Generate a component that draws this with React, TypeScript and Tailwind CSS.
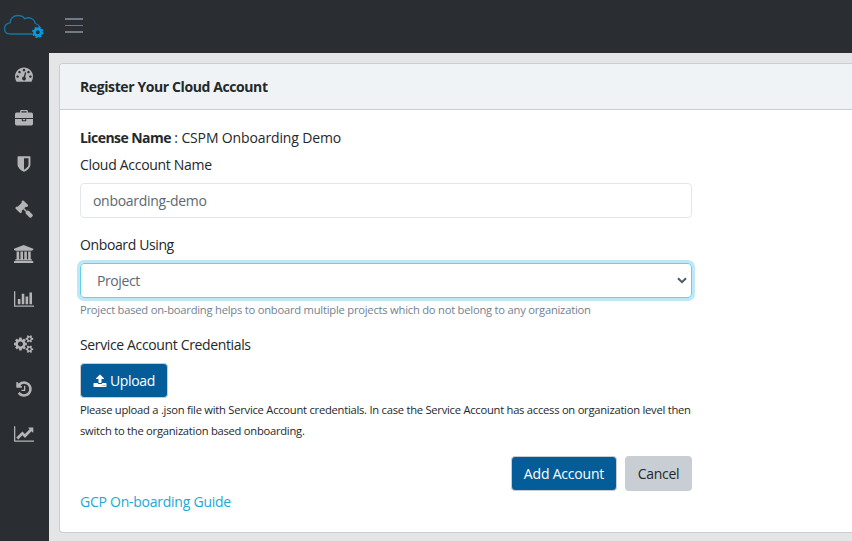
import React from "react";

type Glyph = { name: string; w: number; px: string; d: string };

const GEAR_RING =
  "q0 16-149 31-12 27-30 52 51 113 51 138 0 4-4 7-122 71-124 71-8 0-46-47t-52-68q-20 2-30 2t-30-2q-14 21-52 68t-46 47q-2 0-124-71-4-3-4-7 0-25 51-138-18-25-30-52-149-15-149-31v-140q0-16 149-31 13-29 30-52-51-113-51-138 0-4 4-7 4-2 35-20t59-34 30-16q8 0 46 46.5t52 67.5q20-2 30-2t30 2q51-71 92-112l6-2q4 0 124 70 4 3 4 7 0 25-51 138 17 23 30 52 149 15 149 31z";

const items: Glyph[] = [
  {
    name: "Dashboard",
    w: 1792,
    px: "w-[18px]",
    d: "M384 1152q0-53-37.5-90.5t-90.5-37.5-90.5 37.5-37.5 90.5 37.5 90.5 90.5 37.5 90.5-37.5 37.5-90.5zm192-448q0-53-37.5-90.5t-90.5-37.5-90.5 37.5-37.5 90.5 37.5 90.5 90.5 37.5 90.5-37.5 37.5-90.5zm428 481l101-382q6-26-7.5-48.5t-38.5-29.5-48 6.5-30 39.5l-101 382q-60 5-107 43.5t-63 98.5q-20 77 20 146t117 89 146-20 89-117q16-60-6-117t-72-91zm660-33q0-53-37.5-90.5t-90.5-37.5-90.5 37.5-37.5 90.5 37.5 90.5 90.5 37.5 90.5-37.5 37.5-90.5zm-640-640q0-53-37.5-90.5t-90.5-37.5-90.5 37.5-37.5 90.5 37.5 90.5 90.5 37.5 90.5-37.5 37.5-90.5zm448 192q0-53-37.5-90.5t-90.5-37.5-90.5 37.5-37.5 90.5 37.5 90.5 90.5 37.5 90.5-37.5 37.5-90.5zm320 448q0 261-141 483-19 29-54 29h-1402q-35 0-54-29-141-221-141-483 0-182 71-348t191-286 286-191 348-71 348 71 286 191 191 286 71 348z",
  },
  {
    name: "Inventory",
    w: 1792,
    px: "w-[18px]",
    d: "M640 256h512v-128h-512v128zm1152 640v480q0 66-47 113t-113 47h-1472q-66 0-113-47t-47-113v-480h672v160q0 26 19 45t45 19h320q26 0 45-19t19-45v-160h672zm-768 0v128h-256v-128h256zm768-480v384h-1792v-384q0-66 47-113t113-47h352v-160q0-40 28-68t68-28h576q40 0 68 28t28 68v160h352q66 0 113 47t47 113z",
  },
  {
    name: "Security",
    w: 1792,
    px: "w-[18px]",
    d: "M1344 960v-640h-448v1137q119-63 213-137 235-184 235-360zm192-768v768q0 86-33.5 170.5t-83 150-118 127.5-126.5 103-121 77.5-89.5 49.5-42.5 20q-12 6-26 6t-26-6q-16-7-42.5-20t-89.5-49.5-121-77.5-126.5-103-118-127.5-83-150-33.5-170.5v-768q0-26 19-45t45-19h1152q26 0 45 19t19 45z",
  },
  {
    name: "Policies",
    w: 1792,
    px: "w-[18px]",
    d: "M1771 1536q0 53-37 90l-107 108q-39 37-91 37-53 0-90-37l-363-364q-38-36-38-90 0-53 43-96l-256-256-126 126q-14 14-34 14t-34-14q2 2 12.5 12t12.5 13 10 11.5 10 13.5 6 13.5 5.5 16.5 1.5 18q0 38-28 68-3 3-16.5 18t-19 20.5-18.5 16.5-22 15.5-22 9-26 4.5q-40 0-68-28l-408-408q-28-28-28-68 0-13 4.5-26t9-22 15.5-22 16.5-18.5 20.5-19 18-16.5q30-28 68-28 10 0 18 1.5t16.5 5.5 13.5 6 13.5 10 11.5 10 13 12.5 12 12.5q-14-14-14-34t14-34l348-348q14-14 34-14t34 14q-2-2-12.5-12t-12.5-13-10-11.5-10-13.5-6-13.5-5.5-16.5-1.5-18q0-38 28-68 3-3 16.5-18t19-20.5 18.5-16.5 22-15.5 22-9 26-4.5q40 0 68 28l408 408q28 28 28 68 0 13-4.5 26t-9 22-15.5 22-16.5 18.5-20.5 19-18 16.5q-30 28-68 28-10 0-18-1.5t-16.5-5.5-13.5-6-13.5-10-11.5-10-13-12.5-12-12.5q14 14 14 34t-14 34l-126 126 256 256q43-43 96-43 52 0 91 37l363 363q37 39 37 91z",
  },
  {
    name: "Compliance",
    w: 1920,
    px: "w-[19.3px]",
    d: "M960 0l960 384v128h-128q0 26-20.5 45t-48.5 19h-1526q-28 0-48.5-19t-20.5-45h-128v-128zm-704 640h256v768h128v-768h256v768h128v-768h256v768h128v-768h256v768h59q28 0 48.5 19t20.5 45v64h-1664v-64q0-26 20.5-45t48.5-19h59v-768zm1595 960q28 0 48.5 19t20.5 45v128h-1920v-128q0-26 20.5-45t48.5-19h1782z",
  },
  {
    name: "Reports",
    w: 2048,
    px: "w-[20.6px]",
    d: "M640 896v512h-256v-512h256zm384-512v1024h-256v-1024h256zm1024 1152v128h-2048v-1536h128v1408h1920zm-640-896v768h-256v-768h256zm384-384v1152h-256v-1152h256z",
  },
  {
    name: "Configure",
    w: 1920,
    px: "w-[19.3px]",
    d:
      "M896 896q0-106-75-181t-181-75-181 75-75 181 75 181 181 75 181-75 75-181zm768 512q0-52-38-90t-90-38-90 38-38 90q0 53 37.5 90.5t90.5 37.5 90.5-37.5 37.5-90.5zm0-1024q0-52-38-90t-90-38-90 38-38 90q0 53 37.5 90.5t90.5 37.5 90.5-37.5 37.5-90.5zm-384 421v185q0 10-7 19.5t-16 10.5l-155 24q-11 35-32 76 34 48 90 115 7 11 7 20 0 12-7 19-23 30-82.5 89.5t-78.5 59.5q-11 0-21-7l-115-90q-37 19-77 31-11 108-23 155-7 24-30 24h-186q-11 0-20-7.5t-10-17.5l-23-153q-34-10-75-31l-118 89q-7 7-20 7-11 0-21-8-144-133-144-160 0-9 7-19 10-14 41-53t47-61q-23-44-35-82l-152-24q-10-1-17-9.5t-7-19.5v-185q0-10 7-19.5t16-10.5l155-24q11-35 32-76-34-48-90-115-7-11-7-20 0-12 7-20 22-30 82-89t79-59q11 0 21 7l115 90q34-18 77-32 11-108 23-154 7-24 30-24h186q11 0 20 7.5t10 17.5l23 153q34 10 75 31l118-89q8-7 20-7 11 0 21 8 144 133 144 160 0 8-7 19-12 16-42 54t-45 60q23 48 34 82l152 23q10 2 17 10.5t7 19.5z" +
      "M1920 1338v140" + GEAR_RING +
      "M1920 314v140" + GEAR_RING,
  },
  {
    name: "History",
    w: 1792,
    px: "w-[18px]",
    d: "M1664 896q0 156-61 298t-164 245-245 164-298 61q-172 0-327-72.5t-264-204.5q-7-10-6.5-22.5t8.5-20.5l137-138q10-9 25-9 16 2 23 12 73 95 179 147t225 52q104 0 198.5-40.5t163.5-109.5 109.5-163.5 40.5-198.5-40.5-198.5-109.5-163.5-163.5-109.5-198.5-40.5q-98 0-188 35.5t-160 101.5l137 138q31 30 14 69-17 40-59 40h-448q-26 0-45-19t-19-45v-448q0-42 40-59 39-17 69 14l130 129q107-101 244.5-156.5t284.5-55.5q156 0 298 61t245 164 164 245 61 298zm-640-288v448q0 14-9 23t-23 9h-320q-14 0-23-9t-9-23v-64q0-14 9-23t23-9h224v-352q0-14 9-23t23-9h64q14 0 23 9t9 23z",
  },
  {
    name: "Trends",
    w: 2048,
    px: "w-[20.6px]",
    d: "M2048 1536v128h-2048v-1536h128v1408h1920zm-128-1248v435q0 21-19.5 29.5t-35.5-7.5l-121-121-633 633q-10 10-23 10t-23-10l-233-233-416 416-192-192 585-585q10-10 23-10t23 10l233 233 464-464-121-121q-16-16-7.5-35.5t29.5-19.5h435q14 0 23 9t9 23z",
  },
];

function CloudLogo() {
  return (
    <svg viewBox="0 0 44 30" className="h-[30px] w-[44px]" fill="none">
      <path
        d="M32 24H10.500C6.800 24 4.500 22 4.500 18.800C4.500 15.500 7 13.200 10.200 12.800C10.200 8.500 13.500 5.500 18 5.500C21 5.500 23.500 6.700 24.800 8.800C29 6.200 34.800 9 35.200 13.500C38.300 14.500 40 16.500 40.200 19"
        stroke="#15779f"
        strokeWidth="1.300"
      />
      <circle cx="37.800" cy="22.300" r="3.300" stroke="#0a9be3" strokeWidth="2.600" />
      <circle cx="37.800" cy="22.300" r="5" stroke="#0a9be3" strokeWidth="1.600" strokeDasharray="2.200 1.727" />
    </svg>
  );
}

export default function App() {
  return (
    <div className="flex h-[541px] w-[852px] overflow-hidden bg-[#2a2d32] font-['Open_Sans','Noto_Sans',sans-serif] text-[14px] text-[#23282c]">
      <aside className="flex w-[49px] shrink-0 flex-col">
        <div className="flex h-[51px] items-start pt-[10px]">
          <CloudLogo />
        </div>
        <nav className="flex w-[48px] flex-col">
          {items.map((it) => (
            <a key={it.name} aria-label={it.name} className="flex h-[45px] items-center justify-center">
              <svg viewBox={`0 0 ${it.w} 1792`} className={`h-[18px] ${it.px} fill-[#b3b4b6]`}>
                <path d={it.d} />
              </svg>
            </a>
          ))}
        </nav>
      </aside>

      <div className="flex min-w-0 flex-1 flex-col">
        <header className="flex h-[53px] shrink-0 items-start pt-[18px] pl-[16px]">
          <div className="flex w-[18px] flex-col gap-[5px]">
            <span className="h-[1.5px] bg-[#6f7b86]" />
            <span className="h-[1.5px] bg-[#6f7b86]" />
            <span className="h-[1.5px] bg-[#6f7b86]" />
          </div>
        </header>

        <main className="flex-1 bg-[#e4e5e6] pt-[10px] pl-[10px]">
          <section className="h-[470px] rounded-l border border-r-0 border-[#c8ced3] bg-white">
            <h1 className="flex h-[46px] items-center rounded-tl border-b border-[#c8ced3] bg-[#f0f3f5] pl-[20px] font-bold tracking-[-0.4px]">
              Register Your Cloud Account
            </h1>
            <div className="flex w-[632px] flex-col pt-[17px] pl-[20px]">
              <p className="leading-[21px] tracking-[-0.14px]">
                <b className="tracking-[-0.56px]">License Name</b> : CSPM Onboarding Demo
              </p>
              <label className="mt-[6px] leading-[21px] tracking-[-0.3px]">Cloud Account Name</label>
              <div className="mt-[8px] flex h-[35px] items-center rounded border border-[#e4e7ea] px-[12px] tracking-[-0.3px] text-[#5c6873]">
                onboarding-demo
              </div>
              <label className="mt-[16px] leading-[21px] tracking-[-0.38px]">Onboard Using</label>
              <div className="mt-[8px] flex h-[35px] items-center justify-between rounded border border-[#63d0ee] pr-[4px] pl-[16px] tracking-[-0.4px] text-[#5c6873] ring-3 ring-[#bce9f5]">
                Project
                <svg viewBox="0 0 10 7" className="h-[7px] w-[10px]" fill="none" stroke="#4c5a66" strokeWidth="2">
                  <path d="M1 1.200L5 5.200L9 1.200" />
                </svg>
              </div>
              <small className="mt-[3px] text-[11.200px] leading-[17px] tracking-[-0.225px] text-[#73818f]">
                Project based on-boarding helps to onboard multiple projects which do not belong to any organization
              </small>
              <label className="mt-[16px] leading-[21px] tracking-[-0.36px]">Service Account Credentials</label>
              <button className="mt-[8px] flex h-[35px] w-[88px] items-center justify-center gap-[3px] rounded border border-[#c8ced3] bg-[#045d98] tracking-[-0.35px] text-white">
                <svg viewBox="0 0 1792 1792" className="h-[14px] w-[14px] fill-white">
                  <path d="M1344 1472q0-26-19-45t-45-19-45 19-19 45 19 45 45 19 45-19 19-45zm256 0q0-26-19-45t-45-19-45 19-19 45 19 45 45 19 45-19 19-45zm128-224v320q0 40-28 68t-68 28h-1472q-40 0-68-28t-28-68v-320q0-40 28-68t68-28h427q21 56 70.5 92t110.500 36h256q61 0 110.500-36t70.500-92h427q40 0 68 28t28 68zm-325-648q-17 40-59 40h-256v448q0 26-19 45t-45 19h-256q-26 0-45-19t-19-45v-448h-256q-42 0-59-40-17-39 14-69l448-448q18-19 45-19t45 19l448 448q31 30 14 69z" />
                </svg>
                Upload
              </button>
              <p className="mt-[1px] text-[11.200px] leading-[21px] tracking-[-0.25px] whitespace-nowrap">
                Please upload a .json file with Service Account credentials. In case the Service Account has access on organization level then
                <br />
                switch to the organization based onboarding.
              </p>
              <div className="mt-[15px] flex justify-end gap-[8px]">
                <button className="h-[35px] w-[106px] rounded border border-[#c8ced3] bg-[#045d98] tracking-[-0.2px] text-white">Add Account</button>
                <button className="h-[35px] w-[67px] rounded bg-[#c8ced3] tracking-[-0.3px]">Cancel</button>
              </div>
              <a className="leading-[21px] tracking-[-0.25px] text-[#20a8d8]">GCP On-boarding Guide</a>
            </div>
          </section>
        </main>
      </div>
    </div>
  );
}
